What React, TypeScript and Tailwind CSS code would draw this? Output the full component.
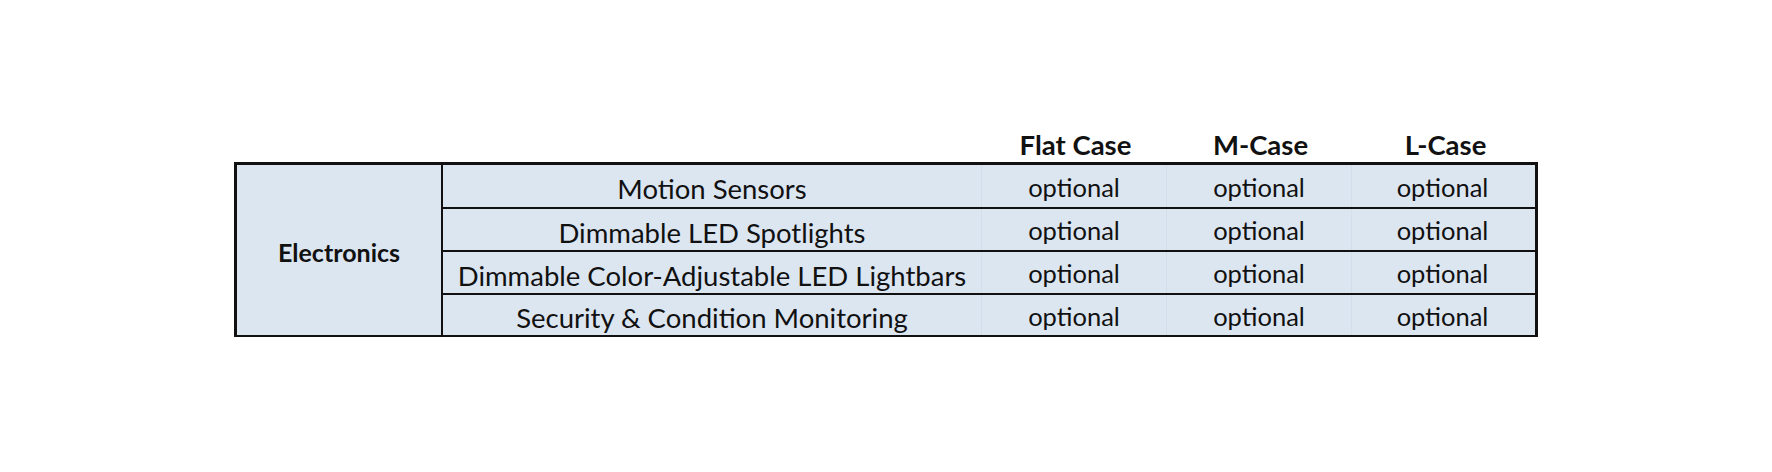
import React from "react";

const features = [
  "Motion Sensors",
  "Dimmable LED Spotlights",
  "Dimmable Color-Adjustable LED Lightbars",
  "Security & Condition Monitoring",
];

const cases = ["Flat Case", "M-Case", "L-Case"];

const rowHeights = ["h-[42px]", "h-[43px]", "h-[43px]", "h-[42px]"];

const App = () => {
  return (
    <div
      className="w-[1772px] h-[472px] bg-white flex justify-center pt-[127px] text-[#111]"
      style={{ fontFamily: "Lato, 'Open Sans', sans-serif" }}
    >
      <div className="w-[1304px]">
        {/* column headers */}
        <div className="grid grid-cols-[209px_540px_185px_185px_185px] h-[35px]">
          <div />
          <div />
          {cases.map((c) => (
            <div key={c} className="flex items-center justify-center text-[27.5px] font-bold leading-none pt-[1px]">
              {c}
            </div>
          ))}
        </div>

        {/* table body */}
        <div className="border-[3px] border-b-2 border-[#111] bg-[#dce6f1] flex">
          <div className="w-[206px] border-r-2 border-[#111] flex items-center justify-center text-[25px] font-bold leading-none pt-[4px]">
            Electronics
          </div>
          <div className="flex-1 flex flex-col">
            {features.map((f, i) => (
              <div
                key={f}
                className={`grid grid-cols-[538px_185px_185px_182px] ${rowHeights[i]} ${i > 0 ? "border-t-2 border-[#111]" : ""}`}
              >
                <div className="flex items-center justify-center text-[27.5px] leading-none pt-[6px]">{f}</div>
                {cases.map((c) => (
                  <div
                    key={c}
                    className="flex items-center justify-center text-[25.5px] leading-none pt-[3px] border-l border-[#d3deea]"
                  >
                    optional
                  </div>
                ))}
              </div>
            ))}
          </div>
        </div>
      </div>
    </div>
  );
};

export default App;
